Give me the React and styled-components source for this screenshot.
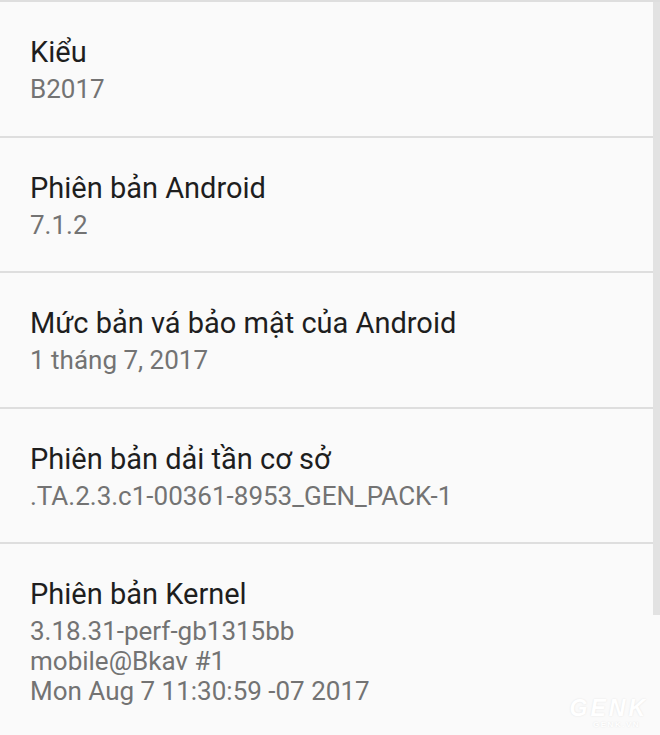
import React from 'react'
import styled, { createGlobalStyle } from 'styled-components'

const GlobalStyle = createGlobalStyle`
  html, body {
    margin: 0;
    padding: 0;
    background: #fafafa;
  }
  body {
    font-family: Roboto, "Noto Sans", sans-serif;
  }
`

const Screen = styled.div`
  position: relative;
  width: 660px;
  height: 735px;
  overflow: hidden;
  background-color: #fafafa;
  border-top: 2px solid #dedede;
  box-sizing: border-box;
`

const List = styled.div`
  display: flex;
  flex-direction: column;
`

const Row = styled.div`
  display: flex;
  flex-direction: column;
  height: 135.5px;
  padding: 32px 30px 0;
  box-sizing: border-box;
  border-bottom: ${(p) => (p.$last ? 'none' : '2px solid #dedede')};
`

const Title = styled.div`
  font-size: 29px;
  line-height: 36px;
  color: #1e1e1e;
`

const Value = styled.div`
  margin-top: ${(p) => (p.$first ? '4px' : '0')};
  font-size: 26px;
  line-height: 30px;
  color: #737373;
`

const Scrollbar = styled.div`
  position: absolute;
  top: 0;
  right: 0;
  width: 7px;
  height: 613px;
  background-color: #e2e2e2;
`

const Watermark = styled.div`
  position: absolute;
  right: 12px;
  bottom: 6px;
  display: flex;
  flex-direction: column;
  align-items: flex-end;
  color: #ffffff;
  font-family: "Liberation Sans", Arial, sans-serif;
  text-shadow: 0 0 2px rgba(0, 0, 0, 0.1);
`

const Brand = styled.span`
  font-size: 23px;
  font-weight: 700;
  font-style: italic;
  letter-spacing: 3px;
  line-height: 20px;
`

const Site = styled.span`
  margin-top: 2px;
  font-size: 8px;
  font-weight: 700;
  letter-spacing: 1.5px;
  line-height: 9px;
  margin-right: 8px;
`

const items = [
  { title: 'Kiểu', value: ['B2017'] },
  { title: 'Phiên bản Android', value: ['7.1.2'] },
  { title: 'Mức bản vá bảo mật của Android', value: ['1 tháng 7, 2017'] },
  { title: 'Phiên bản dải tần cơ sở', value: ['.TA.2.3.c1-00361-8953_GEN_PACK-1'] },
  {
    title: 'Phiên bản Kernel',
    value: ['3.18.31-perf-gb1315bb', 'mobile@Bkav #1', 'Mon Aug 7 11:30:59 -07 2017'],
  },
]

const App = () => {
  return (
    <>
      <GlobalStyle />
      <Screen>
        <List>
          {items.map((item, i) => (
            <Row key={item.title} $last={i === items.length - 1}>
              <Title>{item.title}</Title>
              {item.value.map((line, j) => (
                <Value key={line} $first={j === 0}>
                  {line}
                </Value>
              ))}
            </Row>
          ))}
        </List>
        <Scrollbar />
        <Watermark>
          <Brand>GENK</Brand>
          <Site>GENK.VN</Site>
        </Watermark>
      </Screen>
    </>
  )
}

export default App
